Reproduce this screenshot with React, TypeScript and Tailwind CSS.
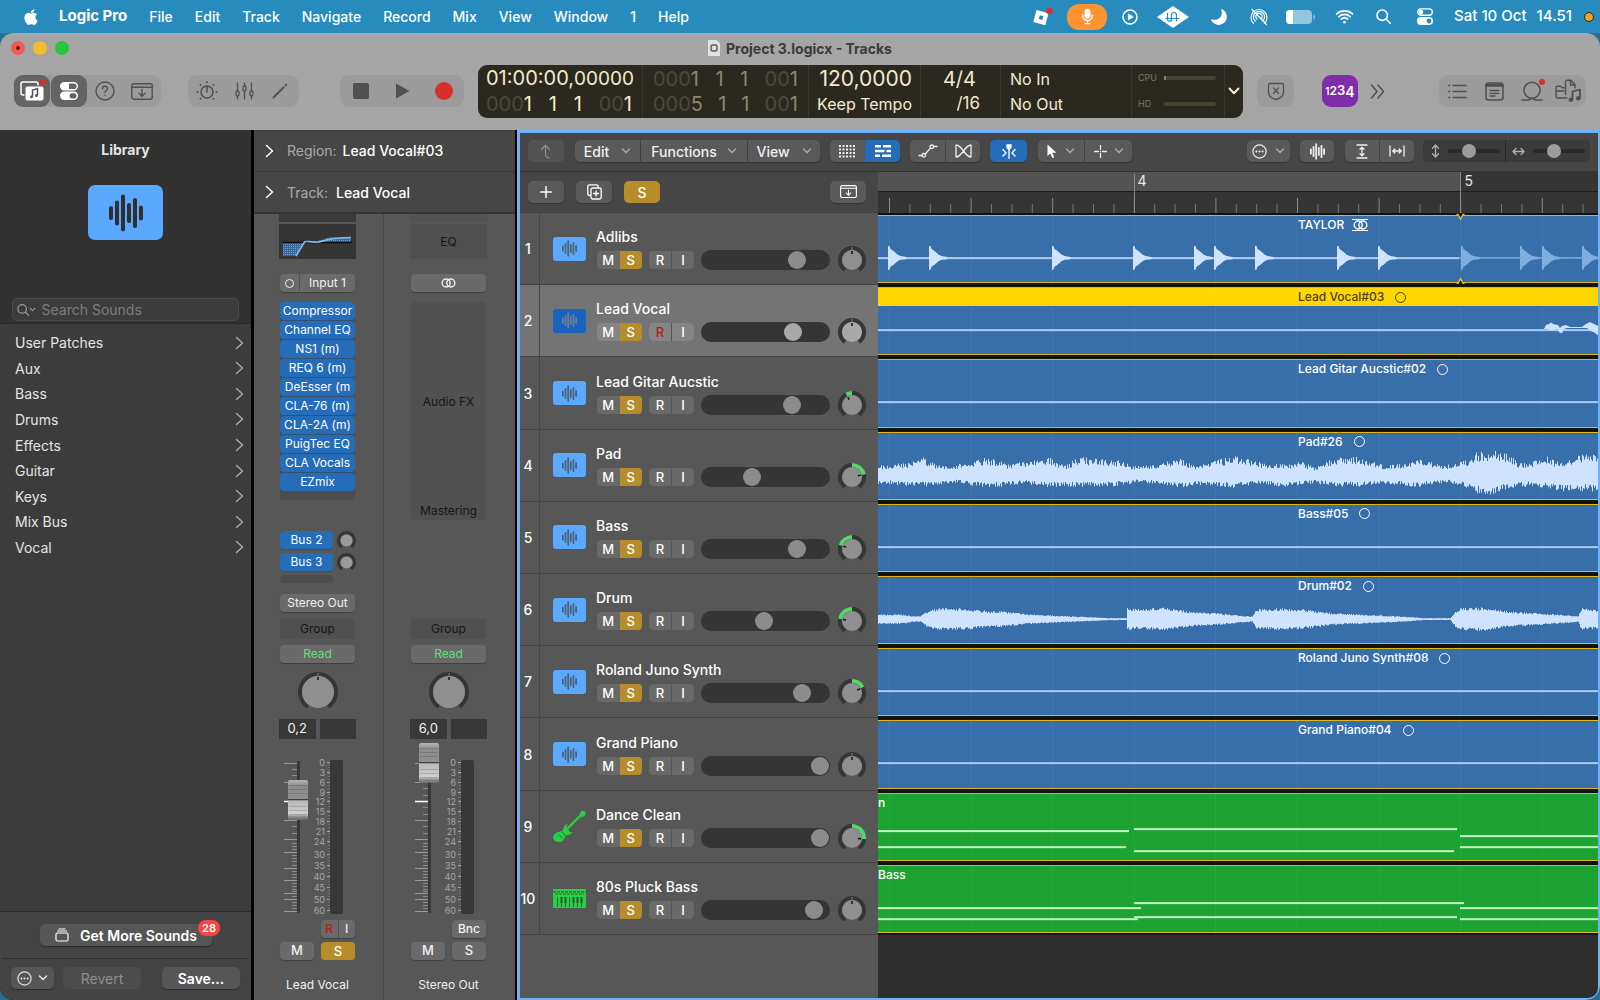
import React from "react";
import { FaApple } from "react-icons/fa";
import { IoMic, IoMoon, IoWifi } from "react-icons/io5";

/* ---------- small drawings ---------- */

type SvgProps = React.SVGProps<SVGSVGElement>;

function Icon({ children, ...p }: SvgProps) {
  return (
    <svg
      fill="none"
      stroke="currentColor"
      strokeWidth={1.5}
      strokeLinecap="round"
      strokeLinejoin="round"
      aria-hidden="true"
      {...p}
    >
      {children}
    </svg>
  );
}

function Chevron({ className = "" }: { className?: string }) {
  return (
    <Icon width={10} height={6} viewBox="0 0 10 6" className={className}>
      <path d="M1.5 1l3.5 3.6L8.500 1" />
    </Icon>
  );
}

function ChevronRight({ className = "" }: { className?: string }) {
  return (
    <Icon width={9} height={14} viewBox="0 0 9 14" className={className}>
      <path d="M1.5 1.500L7.500 7l-6 5.500" />
    </Icon>
  );
}

function WaveBars({ width, height }: { width: number; height: number }) {
  const bars = [14, 25, 37, 20, 30, 15];
  return (
    <svg width={width} height={height} viewBox="0 0 34 38" aria-hidden="true">
      {bars.map((h, i) => (
        <rect key={i} x={i * 6} y={19 - h / 2} width={4} height={h} rx={2} fill="currentColor" />
      ))}
    </svg>
  );
}

function Stereo({ color = "currentColor" }: { color?: string }) {
  return (
    <svg width={15} height={10} viewBox="0 0 15 10" fill="none" stroke={color} strokeWidth={1.4} aria-hidden="true">
      <circle cx={5.2} cy={5} r={4} />
      <circle cx={9.8} cy={5} r={4} />
    </svg>
  );
}

function polar(cx: number, cy: number, r: number, deg: number) {
  const a = ((deg - 90) * Math.PI) / 180;
  return `${(cx + r * Math.cos(a)).toFixed(2)} ${(cy + r * Math.sin(a)).toFixed(2)}`;
}

function arc(c: number, r: number, from: number, to: number) {
  const a = Math.min(from, to);
  const b = Math.max(from, to);
  return `M${polar(c, c, r, a)}A${r} ${r} 0 ${b - a > 180 ? 1 : 0} 1 ${polar(c, c, r, b)}`;
}

function Knob({
  size,
  inner,
  ring,
  angle = 0,
  marker = true,
  fill = "#8f8f8f",
  label,
}: {
  size: number;
  inner: number;
  ring: number;
  angle?: number;
  marker?: boolean;
  fill?: string;
  label: string;
}) {
  const c = size / 2;
  const r = c - ring / 2;
  return (
    <svg width={size} height={size} viewBox={`0 0 ${size} ${size}`} role="img" aria-label={label} className="shrink-0">
      <path d={arc(c, r, -145, 145)} fill="none" stroke="#353535" strokeWidth={ring} />
      {marker && angle !== 0 && <path d={arc(c, r, 0, angle)} fill="none" stroke="#54d769" strokeWidth={ring} />}
      {marker && angle === 0 && <path d={`M${c} 1V${ring + 1}`} stroke="#4fae5c" strokeWidth={1} />}
      <circle cx={c} cy={c} r={inner} fill={fill} />
      {marker && (
        <path
          d={`M${polar(c, c, inner - 1, angle)}L${polar(c, c, inner - 4, angle)}`}
          stroke="#111"
          strokeWidth={1.5}
        />
      )}
    </svg>
  );
}

function DotsCircle() {
  return (
    <Icon width={15} height={15} viewBox="0 0 15 15" strokeWidth={1.2}>
      <circle cx={7.5} cy={7.5} r={6.6} />
      <path d="M4.400 7.500h.01M7.500 7.500h.01M10.600 7.500h.01" strokeWidth={2} />
    </Icon>
  );
}

function TrayIcon({ size = 34 }: { size?: number }) {
  return (
    <Icon width={size} height={(size * 17) / 22} viewBox="0 0 22 17" strokeWidth={1.4}>
      <rect x={0.8} y={0.8} width={20.4} height={15.4} rx={2} />
      <path d="M1 4.200h20M11 6.500v6.500M8 10.300l3 3 3-3" />
    </Icon>
  );
}

/* ---------- menu bar ---------- */

const menus = ["File", "Edit", "Track", "Navigate", "Record", "Mix", "View", "Window", "1", "Help"];

function MenuBar() {
  return (
    <header className="flex h-[33px] shrink-0 items-center justify-between bg-[#288bbd] pl-[22px] pr-1.5 text-[14px] font-medium text-white">
      <nav className="flex items-center gap-[22px]">
        <FaApple className="mr-[-6px] size-[18px]" aria-label="Apple menu" />
        <button className="ml-[3px] text-[15px] font-bold">Logic Pro</button>
        {menus.map((m) => (
          <button key={m}>{m}</button>
        ))}
      </nav>
      <div className="flex items-center">
        <svg width={22} height={20} viewBox="0 0 22 20" aria-hidden="true">
          <path d="M5.500 3L17.500 6.200l-3.200 12L2.300 15z" fill="#fff" />
          <path d="M8.800 8.300l3.600 1-1 3.600-3.600-1z" fill="#288bbd" />
          <circle cx={18.500} cy={4} r={3.300} fill="#dc2f2b" />
        </svg>
        <button aria-label="Microphone in use" className="ml-3.5 flex h-[26px] w-10 items-center justify-center rounded-[12px] bg-[#fb9332]">
          <IoMic className="size-[19px]" />
        </button>
        <Icon width={16} height={16} viewBox="0 0 16 16" className="ml-[15px]">
          <circle cx={8} cy={8} r={7} />
          <path d="M6.400 5.200v5.600L11 8z" fill="currentColor" strokeWidth={0.8} />
        </Icon>
        <svg width={32} height={22} viewBox="0 0 32 22" className="ml-[19px]" aria-hidden="true">
          <path d="M0 11L16 0l16 11-16 11z" fill="#fff" />
          <path
            d="M10.500 7v6c0 2.800 4 2.800 4 0V8.500M14.500 15.500V9.500c0-4 5-4 5 0v6M8.500 12.500h14"
            fill="none"
            stroke="#288bbd"
            strokeWidth={1.200}
          />
        </svg>
        <IoMoon className="ml-[21px] size-[18px] -scale-x-100" />
        <Icon width={18} height={18} viewBox="0 0 18 18" strokeWidth={1.2} className="ml-[22px]">
          <path d="M3.500 15.300a8 8 0 1 1 11 0M5.200 13a5.600 5.600 0 1 1 7.600 0M6.900 11a3.200 3.200 0 1 1 4.200 0M2 1.500l14.500 15" />
        </Icon>
        <svg width={30} height={16} viewBox="0 0 30 16" className="ml-[18px]" aria-hidden="true">
          <rect x={0} y={1} width={26} height={14} rx={4} fill="#93c5de" />
          <path d="M4 1h3v14H4a4 4 0 0 1-4-4V5a4 4 0 0 1 4-4z" fill="#fff" />
          <path d="M27.500 5.500c2 .6 2 4.400 0 5z" fill="#93c5de" />
        </svg>
        <IoWifi className="ml-[18px] size-[21px]" />
        <Icon width={15} height={15} viewBox="0 0 15 15" strokeWidth={1.6} className="ml-[21px]">
          <circle cx={6.200} cy={6.200} r={5.200} />
          <path d="M10 10l4.200 4.200" />
        </Icon>
        <svg width={16} height={17} viewBox="0 0 16 17" className="ml-[26px]" aria-hidden="true">
          <rect x={0.700} y={0.900} width={14.600} height={6.400} rx={3.200} fill="none" stroke="#fff" strokeWidth={1.400} />
          <circle cx={4} cy={4.100} r={2.300} fill="#fff" />
          <rect x={0} y={9} width={16} height={8} rx={4} fill="#fff" />
          <circle cx={12} cy={13} r={2.400} fill="#288bbd" />
        </svg>
        <span className="ml-[21px] text-[15px]">Sat 10 Oct</span>
        <span className="ml-2.5 text-[15px]">14.51</span>
        <span className="ml-3 size-2.5 rounded-full border border-[#1c2a30] bg-[#f59e21]" />
      </div>
    </header>
  );
}

/* ---------- window chrome ---------- */

const toolGroup = "flex h-8 items-center rounded-[9px] bg-[#9b9b9b] text-[#505050]";

function Lcd() {
  const dim = "text-[#4b483b]";
  const cell = "flex flex-col justify-center border-r border-[#3a372c]";
  const line = "flex h-[25px] items-center";
  return (
    <section
      aria-label="Transport display"
      className="flex h-[53px] w-[765px] shrink-0 rounded-[9px] bg-[#2b2820] text-[20px] text-[#f3ecc9]"
    >
      <div className={`${cell} w-[165px] pl-2 pr-2.5`}>
        <div className="flex h-[25px] items-baseline leading-6">
          <span>01:00:00,</span>
          <span className="text-[19px]">00000</span>
        </div>
        <div className={`${line} justify-between`}>
          <span><span className={dim}>000</span>1</span>
          <span>1</span>
          <span>1</span>
          <span><span className={dim}>00</span>1</span>
        </div>
      </div>
      <div className={`${cell} w-[166px] px-2.5 text-[#8b8770]`}>
        {["1", "5"].map((n) => (
          <div key={n} className={`${line} justify-between`}>
            <span><span className={dim}>000</span>{n}</span>
            <span>1</span>
            <span>1</span>
            <span><span className={dim}>00</span>1</span>
          </div>
        ))}
      </div>
      <div className={`${cell} w-[112px] items-end pr-2`}>
        <span className={`${line} text-[21px]`}>120,0000</span>
        <span className={`${line} text-[16px]`}>Keep Tempo</span>
      </div>
      <div className={`${cell} w-[80px] items-end pr-5`}>
        <span className={`${line} pr-1`}>4/4</span>
        <span className={`${line} text-[17px]`}>/16</span>
      </div>
      <div className={`${cell} w-[131px] pl-[9px] text-[16px]`}>
        <span className={line}>No In</span>
        <span className={line}>No Out</span>
      </div>
      <div className={`${cell} w-[93px] gap-1 pl-1.5 text-[9px] text-[#7a765c]`}>
        {["CPU", "HD"].map((n) => (
          <span key={n} className="flex h-[22px] items-center">
            <span className="w-[26px]">{n}</span>
            <span className="h-1 w-[52px] rounded-sm bg-[#47432f]">
              {n === "CPU" && <span className="block h-1 w-0.5 bg-[#8b8770]" />}
            </span>
          </span>
        ))}
      </div>
      <button aria-label="Display mode" className="flex flex-1 items-center justify-center">
        <Icon width={12} height={8} viewBox="0 0 12 8" strokeWidth={2}>
          <path d="M1.500 1.500L6 6.300l4.500-4.800" />
        </Icon>
      </button>
    </section>
  );
}

function Toolbar() {
  return (
    <div className="flex h-[67px] items-center px-3.5 pb-[11px]">
      <div className={`${toolGroup} w-[147px]`}>
        <button aria-label="Library" className="relative flex h-8 w-9 items-center justify-center rounded-[9px] bg-[#646464] text-white">
          <svg width={24} height={20} viewBox="0 0 24 20" aria-hidden="true">
            <rect x={1} y={1} width={17} height={13} rx={2} fill="none" stroke="#fff" strokeWidth={1.500} />
            <rect x={5} y={5} width={19} height={15} rx={2.500} fill="#fff" stroke="#646464" />
            <path d="M12.500 15.500V9l5-1.200V14" fill="none" stroke="#555" strokeWidth={1.500} />
            <circle cx={11.500} cy={15.800} r={1.500} fill="#555" />
            <circle cx={16.500} cy={14.500} r={1.500} fill="#555" />
          </svg>
          <span className="absolute right-1 top-1 size-1.5 rounded-full bg-[#dc2f2b]" />
        </button>
        <button aria-label="Inspector" className="ml-px flex h-8 w-9 items-center justify-center rounded-[9px] bg-[#646464] text-white">
          <svg width={18} height={18} viewBox="0 0 18 18" aria-hidden="true">
            <rect x={0.700} y={0.700} width={16.600} height={7} rx={3.500} fill="none" stroke="#fff" strokeWidth={1.400} />
            <path d="M4.200 1H9v6.500H4.200a3.200 3.200 0 0 1 0-6.500z" fill="#fff" />
            <rect x={0} y={9.600} width={18} height={8.400} rx={4.200} fill="#fff" />
            <rect x={9.500} y={11.200} width={7} height={5.200} rx={2.600} fill="#646464" />
          </svg>
        </button>
        <button aria-label="Quick Help" className="flex h-8 w-9 items-center justify-center">
          <Icon width={20} height={20} viewBox="0 0 20 20" strokeWidth={1.400}>
            <circle cx={10} cy={10} r={9} />
            <path d="M7.500 7.800c.1-3.400 5-3.300 5-.3 0 2-2.500 2-2.500 4M10 14.200v.1" />
          </Icon>
        </button>
        <button aria-label="Toolbar" className="flex h-8 flex-1 items-center justify-center">
          <TrayIcon size={22} />
        </button>
      </div>
      <div className={`${toolGroup} ml-[27px] w-[111px] justify-between px-[7px]`}>
        <button aria-label="Smart Controls">
          <Icon width={24} height={20} viewBox="0 0 24 20">
            <circle cx={12} cy={11} r={6} />
            <path d="M12 5.500V11" />
            <path d="M12 1.200h.01M5.500 4h.01M18.500 4h.01M2.500 11h.01M21.500 11h.01M5.500 17.800h.01M18.500 17.800h.01" strokeWidth={2} />
          </Icon>
        </button>
        <button aria-label="Mixer" className="mr-0.5">
          <Icon width={19} height={18} viewBox="0 0 19 18" strokeWidth={1.300}>
            <path d="M2.500 1v8M2.500 14v3M9.500 1v3M9.500 9v8M16.500 1v8M16.500 14v3" />
            <rect x={1} y={9} width={3} height={5} rx={1.500} />
            <rect x={8} y={4} width={3} height={5} rx={1.500} />
            <rect x={15} y={9} width={3} height={5} rx={1.500} />
          </Icon>
        </button>
        <button aria-label="Editors" className="mr-1">
          <Icon width={16} height={16} viewBox="0 0 16 16" strokeWidth={1.900}>
            <path d="M1.500 14.500L11.500 4.500M13.500 2.500l.8-.8" />
          </Icon>
        </button>
      </div>
      <div className={`${toolGroup} ml-[41px] w-[124px] justify-between px-[11px]`}>
        <button aria-label="Stop" className="ml-0.5 size-4 rounded-[2px] bg-[#505050]" />
        <button aria-label="Play">
          <svg width={15} height={16} viewBox="0 0 15 16" aria-hidden="true">
            <path d="M1 0.500L14.500 8 1 15.500z" fill="#505050" />
          </svg>
        </button>
        <button aria-label="Record" className="size-[18px] rounded-full bg-[#d92e2a]" />
      </div>
      <div className="ml-3.5">
        <Lcd />
      </div>
      <button aria-label="Replace mode" className={`${toolGroup} ml-3.5 w-[37px] justify-center`}>
        <Icon width={18} height={19} viewBox="0 0 18 19" strokeWidth={1.300}>
          <path d="M3 1.500h12c1 0 1.500.5 1.500 1.500v7c0 4-3 6.500-7.500 7.500C4.500 16.500 1.500 14 1.500 10V3c0-1 .5-1.500 1.500-1.500zM6.500 6l5 5.500M11.500 6l-5 5.500" />
        </Icon>
      </button>
      <button aria-label="Count-in" className="ml-7 flex h-8 w-9 items-center justify-center rounded-[9px] bg-[#7f2dab] font-semibold text-white">
        <span className="text-[10px]">1</span>
        <span className="text-[12px]">2</span>
        <span className="text-[13px]">3</span>
        <span className="text-[14px]">4</span>
      </button>
      <button aria-label="More controls" className="ml-3 text-[#505050]">
        <Icon width={15} height={15} viewBox="0 0 15 15">
          <path d="M1.500 1l5.500 6.500L1.500 14M8 1l5.500 6.500L8 14" />
        </Icon>
      </button>
      <div className={`${toolGroup} ml-auto w-[147px] justify-between pl-[9px] pr-1`}>
        <button aria-label="List editors">
          <Icon width={19} height={15} viewBox="0 0 19 15" strokeWidth={1.400}>
            <path d="M5 1.500h13M5 7.500h13M5 13.500h13" />
            <path d="M1.200 1.500h.01M1.200 7.500h.01M1.200 13.500h.01" strokeWidth={2} />
          </Icon>
        </button>
        <button aria-label="Note pads" className="ml-1.5">
          <Icon width={19} height={19} viewBox="0 0 19 19" strokeWidth={1.500}>
            <rect x={1} y={1} width={17} height={17} rx={2.500} />
            <path d="M1.500 3.200h16" strokeWidth={3} />
            <path d="M5 8.500h9M5 11.300h9M5 14h5" strokeWidth={1.300} />
          </Icon>
        </button>
        <button aria-label="Loop browser" className="relative ml-1">
          <Icon width={22} height={20} viewBox="0 0 22 20" strokeWidth={1.500}>
            <circle cx={11} cy={9.300} r={8} />
            <path d="M1 19h5c2.500 0 4-.7 5-1.700M21 19h-5c-2.500 0-4-.7-5-1.700" />
          </Icon>
          <span className="absolute -right-0.5 -top-0.5 size-1.5 rounded-full bg-[#dc2f2b]" />
        </button>
        <button aria-label="Browsers">
          <Icon width={27} height={24} viewBox="0 0 27 24" strokeWidth={1.400}>
            <path d="M12 19H3c-1.200 0-2-.8-2-2V9c0-1 .7-1.700 1.700-1.700h3l1.500 1.500H9M1 12h8" />
            <path d="M10.500 15.500V3c0-1 .7-1.700 1.700-1.700h3.600L20 5.500V9M15.500 1.500V6H20" />
            <path d="M17.500 20.500v-8l7.500-2v8.500" strokeWidth={1.800} />
            <circle cx={15.800} cy={20.800} r={1.600} fill="currentColor" />
            <circle cx={23.300} cy={19.200} r={1.600} fill="currentColor" />
          </Icon>
        </button>
      </div>
    </div>
  );
}

function TitleBar() {
  return (
    <div className="shrink-0 bg-[#a5a5a5]">
      <div className="grid h-[30px] grid-cols-[1fr_auto_1fr] items-center px-[11px]">
        <div className="flex gap-2">
          <button aria-label="Close" className="flex size-3.5 items-center justify-center rounded-full bg-[#ee5c54]">
            <span className="size-1 rounded-full bg-[#6e0c08]" />
          </button>
          <button aria-label="Minimise" className="size-3.5 rounded-full bg-[#f2bd2e]" />
          <button aria-label="Zoom" className="size-3.5 rounded-full bg-[#28c63f]" />
        </div>
        <h1 className="flex items-center gap-1.5 text-[14px] font-bold text-[#3b3b3b]">
          <svg width={12} height={16} viewBox="0 0 12 16" aria-hidden="true">
            <path d="M0 0h8.500L12 3.500V16H0z" fill="#e2e2e2" />
            <rect x={3} y={5} width={6} height={6} rx={1.500} fill="#ddd" stroke="#555" strokeWidth={1.400} />
          </svg>
          Project 3.logicx - Tracks
        </h1>
      </div>
      <Toolbar />
    </div>
  );
}

/* ---------- library ---------- */

const categories = ["User Patches", "Aux", "Bass", "Drums", "Effects", "Guitar", "Keys", "Mix Bus", "Vocal"];

function Library() {
  const btn = "flex h-[22px] items-center justify-center rounded-[5px] bg-[#565656] shadow-[0_1px_1px_#2b2b2b]";
  return (
    <aside className="flex w-[251px] shrink-0 flex-col bg-[#3c3c3c] text-[14px] text-[#e4e4e4]">
      <div className="flex h-[194px] shrink-0 flex-col items-center border-b border-[#292929] bg-[#323232] px-3 pt-[9px]">
        <h2 className="font-bold leading-[22px]">Library</h2>
        <div className="mt-6 flex h-[55px] w-[75px] items-center justify-center rounded-[7px] bg-[#5ba8ff] text-[#303030]">
          <WaveBars width={34} height={38} />
        </div>
        <label className="mt-[58px] flex h-[23px] w-full items-center rounded-[5px] border border-[#4b4b4b] bg-[#3c3c3c] pl-1 text-[#999]">
          <Icon width={14} height={14} viewBox="0 0 14 14" strokeWidth={1.400}>
            <circle cx={5.800} cy={5.800} r={4.800} />
            <path d="M9.500 9.500l3.700 3.700" />
          </Icon>
          <Chevron className="h-[5px] w-2" />
          <input aria-label="Search Sounds" placeholder="Search Sounds" className="ml-[5px] w-full bg-transparent outline-none placeholder:text-[#7c7c7c]" />
        </label>
      </div>
      <ul className="mt-1.5 flex h-[230px] flex-col">
        {categories.map((c) => (
          <li key={c} className="flex-1">
            <button className="flex h-full w-full items-center justify-between pl-[15px] pr-[7px]">
              {c}
              <ChevronRight className="text-[#a8a8a8]" />
            </button>
          </li>
        ))}
      </ul>
      <div className="mt-auto shrink-0 border-t border-[#2c2c2c] bg-[#444]">
        <div className="mx-0.5 h-[47px] border-b border-[#2f2f2f] pl-[38px] pt-3">
          <button className={`${btn} relative w-[172px] gap-[11px] font-semibold text-white`}>
            <Icon width={14} height={14} viewBox="0 0 14 14" strokeWidth={1.200}>
              <rect x={1} y={5} width={12} height={8} rx={1.500} />
              <path d="M2.500 3h9M4 1h6" />
            </Icon>
            Get More Sounds
            <span className="absolute -right-2 -top-1 flex h-4 w-[22px] items-center justify-center rounded-full bg-[#fb4440] text-[11px]">28</span>
          </button>
        </div>
        <div className="flex h-[41px] items-start px-[11px] pt-2">
          <button aria-label="Actions" className={`${btn} w-[43px] gap-1.5`}>
            <DotsCircle />
            <Chevron />
          </button>
          <button disabled className="ml-[9px] flex h-[22px] w-[78px] items-center justify-center rounded-[5px] bg-[#4c4c4c] text-[#8e8e8e]">Revert</button>
          <button className={`${btn} ml-auto w-[78px] font-semibold text-white`}>Save...</button>
        </div>
      </div>
    </aside>
  );
}

/* ---------- inspector ---------- */

const scale: [number, number][] = [
  [0, 23], [3, 33], [6, 43], [9, 53], [12, 62], [15, 72], [18, 82], [21, 92], [24, 102],
  [30, 115], [35, 126], [40, 137], [45, 148], [50, 160], [60, 171],
];
const longTicks = [23, 42, 80, 99, 112, 128, 140, 153, 159, 171];
const shortTicks = [29, 35, 48, 55, 67, 74, 86, 93, 103, 106, 109, 115, 118, 121, 125, 131, 134, 137, 143, 146, 149, 151, 156, 162, 165, 168];

function Fader({ cap, id }: { cap: number; id: string }) {
  return (
    <svg width={76} height={177} viewBox="0 0 76 177" role="img" aria-label={`${id} fader and level meter`}>
      <defs>
        <linearGradient id={id} x1="0" y1="0" x2="0" y2="1">
          <stop offset="0" stopColor="#b4b4b4" />
          <stop offset="0.15" stopColor="#8d8d8d" />
          <stop offset="0.47" stopColor="#8f8f8f" />
          <stop offset="0.49" stopColor="#333" />
          <stop offset="0.52" stopColor="#b9b9b9" />
          <stop offset="0.85" stopColor="#cfcfcf" />
          <stop offset="0.92" stopColor="#8a8a8a" />
          <stop offset="1" stopColor="#6a6a6a" />
        </linearGradient>
      </defs>
      <rect x={17} y={21} width={3} height={152} rx={1} fill="#383838" />
      {longTicks.map((y) => <path key={y} d={`M4 ${y}.5h13`} stroke="#989898" />)}
      {shortTicks.map((y) => <path key={y} d={`M12 ${y}.5h5`} stroke="#8a8a8a" />)}
      <path d="M4 61.500h13" stroke="#fff" strokeWidth={1.500} />
      <rect x={8} y={cap} width={20} height={40} rx={2} fill={`url(#${id})`} />
      {[5, 9, 13, 26, 30, 34].map((d) => (
        <path key={d} d={`M9 ${cap + d}.5h18`} stroke="#000" strokeOpacity={0.15} />
      ))}
      <rect x={50} y={20} width={13} height={154} rx={2} fill="#383838" />
      {scale.map(([n, y]) => (
        <g key={n}>
          <text x={45} y={y + 3} textAnchor="end" fontSize={9} fill="#a6a6a6">{n}</text>
          <path d={`M47 ${y - 0.5}h3`} stroke="#a6a6a6" />
        </g>
      ))}
      <path d="M49 24V171" stroke="#8a8a8a" strokeDasharray="1 2" />
    </svg>
  );
}

const plugins = ["Compressor", "Channel EQ", "NS1 (m)", "REQ 6 (m)", "DeEsser (m", "CLA-76 (m)", "CLA-2A (m)", "PuigTec EQ", "CLA Vocals", "EZmix"];

const grayBase = "flex items-center justify-center rounded-[4px] bg-[#6a6a6a] shadow-[0_1px_1px_#404040]";
const grayBtn = `${grayBase} text-[#f0f0f0]`;
const blueBtn = "flex h-[18px] items-center justify-center overflow-hidden whitespace-nowrap rounded-[4px] bg-[#256cb9] text-white shadow-[0_1px_0_#35506f]";

function StripLower({ value, cap, name, children, first }: { value: string; cap: number; name: string; children: React.ReactNode; first: boolean }) {
  return (
    <>
      <button className="mt-[7px] h-5 bg-[#505050] text-[#161616]">Group</button>
      <button className={`${grayBase} mt-1.5 h-[18px] text-[#5fe07c]`}>Read</button>
      <div className="mt-[9px] flex h-10 justify-center">
        <Knob size={40} inner={16} ring={4} label={`${name} pan`} />
      </div>
      <div className="-mx-px mt-[7px] flex h-5 gap-1 text-[13px] text-[#f0f0f0]">
        <span className="flex flex-1 items-center justify-center bg-[#383838]">{value}</span>
        <span className="flex-1 bg-[#383838]" />
      </div>
      <div className="mt-px h-[177px]">
        <Fader cap={cap} id={first ? "cap-track" : "cap-output"} />
      </div>
      {children}
      <span className="mt-4 whitespace-nowrap text-center text-[12px] leading-[18px] text-[#f0f0f0]">{name}</span>
    </>
  );
}

function Inspector() {
  const head = "flex h-[42px] w-full items-center gap-[13px] bg-[#464646] pl-[11px] text-[14px]";
  return (
    <aside className="flex w-[261px] shrink-0 flex-col bg-[#575757] text-[12px]">
      <button className={`${head} border-b border-[#383838]`}>
        <ChevronRight className="text-white" />
        <span className="text-[#a9a9a9]">Region: <span className="ml-0.5 font-medium text-white">Lead Vocal#03</span></span>
      </button>
      <button className={`${head} border-b-2 border-[#363636]`}>
        <ChevronRight className="text-white" />
        <span className="text-[#a9a9a9]">Track: <span className="ml-1 font-medium text-white">Lead Vocal</span></span>
      </button>
      <div className="flex min-h-0 flex-1">
        <div className="flex w-[130px] shrink-0 flex-col border-r border-[#484848] pl-[26px]">
          <div className="flex w-[75px] flex-col">
            <div className="-mx-px h-2 bg-[#3a3a3a]" />
            <svg width={77} height={35} viewBox="0 0 77 35" className="-mx-px mt-0.5 bg-[#353535]" role="img" aria-label="EQ curve">
              <defs>
                <pattern id="eq-dots" width={2} height={2} patternUnits="userSpaceOnUse">
                  <rect width={2} height={2} fill="#42648a" />
                  <rect width={1} height={1} fill="#6aa2dc" />
                </pattern>
              </defs>
              <path d="M4 19V32h13L25 19z" fill="url(#eq-dots)" />
              <path d="M30 18c14-1 17-4 21-5h21v5z" fill="url(#eq-dots)" />
              <path d="M4 18.500h69" stroke="#0c0c0c" strokeWidth={1.400} />
              <path d="M17 32l8.500-14c1-1.500 10 .5 13 .2C44 17.500 48 14 72 13.500" fill="none" stroke="#7db8f5" strokeWidth={1.600} />
            </svg>
            <div className="mt-[15px] flex h-[18px] gap-px">
              <button aria-label="Input format" className={`${grayBtn} w-[19px] rounded-r-none`}>
                <span className="size-[9px] rounded-full border-[1.5px] border-[#f0f0f0]" />
              </button>
              <button className={`${grayBtn} flex-1 rounded-l-none`}>Input 1</button>
            </div>
            <div className="mt-2.5 flex flex-col gap-px rounded-[4px] bg-[#4d4d4d] pb-[9px]">
              {plugins.map((p) => <button key={p} className={blueBtn}>{p}</button>)}
            </div>
            <div className="mt-[31px] flex flex-col gap-1">
              {["Bus 2", "Bus 3"].map((b) => (
                <div key={b} className="flex h-[18px] items-center gap-1">
                  <button className={`${blueBtn} w-[53px] shrink-0`}>{b}</button>
                  <Knob size={19} inner={6} ring={3} marker={false} fill="#9a9a9a" label={`${b} send level`} />
                </div>
              ))}
              <div className="h-2 w-[53px] rounded-[4px] bg-[#4d4d4d]" />
            </div>
            <button className={`${grayBtn} mt-[11px] h-[18px]`}>Stereo Out</button>
            <StripLower value="0,2" cap={40} name="Lead Vocal" first>
              <div className="ml-auto mt-[3px] flex h-[18px] w-[34px]">
                <button className={`${grayBase} flex-1 rounded-r-none border-r border-[#555] font-medium text-[#a82620]`}>R</button>
                <button className={`${grayBtn} flex-1 rounded-l-none font-medium`}>I</button>
              </div>
              <div className="mt-1 flex h-[18px] justify-between text-[13px] font-medium">
                <button className={`${grayBtn} w-[34px]`}>M</button>
                <button className="w-[34px] rounded-[4px] bg-[#b78d2c] text-white">S</button>
              </div>
            </StripLower>
          </div>
        </div>
        <div className="flex flex-1 flex-col pl-[27px]">
          <div className="flex w-[75px] flex-col">
            <div className="-mx-px h-2 bg-[#535353]" />
            <button className="-mx-px mt-0.5 h-[35px] bg-[#505050] text-[#161616]">EQ</button>
            <button aria-label="Stereo format" className={`${grayBtn} mt-[15px] h-[18px]`}>
              <Stereo />
            </button>
            <div className="mt-2.5 flex h-[218px] flex-col items-center justify-between rounded-[4px] bg-[#515151] text-[#161616]">
              <span />
              <span>Audio FX</span>
              <span>Mastering</span>
            </div>
            <div className="h-[92px]" />
            <StripLower value="6,0" cap={3} name="Stereo Out" first={false}>
              <button className={`${grayBtn} ml-auto mt-[3px] h-[18px] w-[34px] font-medium`}>Bnc</button>
              <div className="mt-1 flex h-[18px] justify-between text-[13px] font-medium">
                <button className={`${grayBtn} w-[34px]`}>M</button>
                <button className={`${grayBtn} w-[34px]`}>S</button>
              </div>
            </StripLower>
          </div>
        </div>
      </div>
    </aside>
  );
}

/* ---------- waveforms ---------- */

const MID = 45;

function noise(i: number) {
  const v = Math.sin(i * 127.1 + 11.7) * 43758.5453;
  return v - Math.floor(v);
}

function sample(points: [number, number][], x: number) {
  for (let i = 1; i < points.length; i++) {
    if (x <= points[i][0]) {
      const [x0, y0] = points[i - 1];
      const [x1, y1] = points[i];
      return x1 === x0 ? y1 : y0 + ((y1 - y0) * (x - x0)) / (x1 - x0);
    }
  }
  return points[points.length - 1][1];
}

function envelope(up: [number, number][], down: [number, number][], rough: number) {
  let d = "";
  for (let x = 0; x < 720; x++) {
    const a = sample(up, x) * (1 - rough * noise(x));
    const b = sample(down, x) * (1 - rough * noise(x + 900));
    d += `M${x} ${(MID - a).toFixed(1)}h1V${(MID + b).toFixed(1)}h-1z`;
  }
  return d;
}

const padUp: [number, number][] = [
  [0, 10], [30, 13], [45, 18], [60, 10], [72, 8], [85, 13], [110, 18], [130, 11], [170, 18], [188, 10], [200, 19], [240, 15], [255, 9],
  [275, 10], [300, 17], [318, 10], [340, 16], [362, 20], [385, 12], [410, 11], [420, 15], [436, 8], [455, 17], [475, 19], [495, 15], [505, 10],
  [530, 12], [545, 17], [565, 9], [580, 14], [592, 15], [598, 23], [615, 25], [632, 21], [640, 13], [650, 12], [668, 19], [682, 12], [700, 20], [720, 24],
];
const padDown: [number, number][] = [
  [0, 9], [20, 10], [40, 12], [70, 9], [80, 8], [100, 12], [120, 12], [145, 9], [170, 12], [195, 12], [240, 11], [262, 7], [300, 13],
  [325, 10], [355, 13], [380, 9], [405, 12], [437, 8], [455, 12], [480, 12], [505, 9], [540, 12], [572, 8], [585, 11], [596, 18],
  [612, 20], [630, 14], [655, 11], [680, 16], [720, 17],
];
const drumEnv: [number, number][] = [
  [0, 5], [22, 5], [35, 3], [42, 3], [50, 9], [60, 11], [88, 11], [110, 8], [125, 8], [150, 5], [190, 3], [215, 2], [230, 1],
  [248, 1], [249, 11], [265, 10], [285, 12], [310, 8], [340, 6], [370, 3], [374, 3], [378, 10], [395, 11], [425, 10],
  [455, 6], [480, 5], [520, 3], [545, 1], [572, 1], [577, 8], [582, 11], [605, 12], [630, 8], [660, 6], [690, 4], [700, 3], [703, 11], [720, 10],
];
const padPath = envelope(padUp, padDown, 0.45);
const drumPath = envelope(drumEnv, drumEnv, 0.28);

function hit(x: number) {
  return `M${x} ${MID - 12}l1.500 0 1 3 3 2 4 3.500 3 1.500 6 1v2l-6 .5-3 1.500-4 3.500-3 2-1 3h-1.500z`;
}
const hits = [10, 51, 174, 255, 316, 336, 377, 459, 500];
const faintHits = [583, 642, 664, 704];

const beats = [11.5, 93, 174.500, 256, 337.500, 419, 501, 582.500, 664];

type Track = {
  name: string;
  volume: number;
  pan: number;
  icon?: "guitar" | "synth";
  region: string;
  midi?: [number, number, number][];
};

const tracks: Track[] = [
  { name: "Adlibs", volume: 78, pan: 0, region: "TAYLOR" },
  { name: "Lead Vocal", volume: 75, pan: 0, region: "Lead Vocal#03" },
  { name: "Lead Gitar Aucstic", volume: 74, pan: -28, region: "Lead Gitar Aucstic#02" },
  { name: "Pad", volume: 38, pan: 78, region: "Pad#26" },
  { name: "Bass", volume: 78, pan: -72, region: "Bass#05" },
  { name: "Drum", volume: 49, pan: -80, region: "Drum#02" },
  { name: "Roland Juno Synth", volume: 83, pan: 62, region: "Roland Juno Synth#08" },
  { name: "Grand Piano", volume: 99, pan: 0, region: "Grand Piano#04" },
  {
    name: "Dance Clean", volume: 99, pan: 95, icon: "guitar", region: "n",
    midi: [[0, 251, 40], [0, 248, 56], [256, 579, 38], [256, 576, 60], [582, 720, 45], [582, 720, 56]],
  },
  {
    name: "80s Pluck Bass", volume: 94, pan: 0, icon: "synth", region: "Bass",
    midi: [[0, 263, 45], [0, 260, 56], [256, 586, 40], [256, 579, 54], [582, 720, 45], [582, 720, 56]],
  },
];

function Wave({ index, track }: { index: number; track: Track }) {
  const pale = "#cfe3ff";
  return (
    <svg className="absolute inset-0 h-full w-full" viewBox="0 0 720 72" preserveAspectRatio="none" aria-hidden="true">
      {beats.map((x) => (
        <path key={x} d={`M${x} 2V70`} stroke="#fff" strokeOpacity={0.06} />
      ))}
      {track.midi ? (
        track.midi.map(([a, b, y]) => <rect key={`${a}-${y}`} x={a} y={y - 1} width={b - a} height={2} fill="#c3f2c4" />)
      ) : index === 0 ? (
        <>
          <rect x={0} y={MID - 1} width={581} height={2} fill={pale} fillOpacity={0.8} />
          <rect x={581} y={MID - 1} width={139} height={1.500} fill="#7fadde" />
          <path d={hits.map(hit).join("")} fill={pale} />
          <path d={faintHits.map(hit).join("")} fill="#7fadde" />
          <path d="M578.500 1.500h1.500l2.500 4.500 2.500-4.500h1.500M578.500 70h1.500l2.500-4.500 2.500 4.500h1.500" fill="#111" stroke="#e8c418" strokeWidth={1.400} />
        </>
      ) : index === 3 ? (
        <path d={padPath} fill={pale} />
      ) : index === 5 ? (
        <path d={drumPath} fill={pale} />
      ) : (
        <>
          <rect x={0} y={MID - 1} width={720} height={2} fill="#a9cbf2" />
          {index === 1 && (
            <path
              d="M666 44l2-4 3-1 2-1.500 2 1.500 5 1 2 3 2-2 4-1 4 2h12l4-3 4-2 4 2 4 2v9l-4-3-3-1-4-3h-20l-3 1-2 4-3-1-1-3-7 1-4-1z"
              fill={pale}
            />
          )}
        </>
      )}
    </svg>
  );
}

/* ---------- tracks area ---------- */

function Region({ index, track }: { index: number; track: Track }) {
  const selected = index === 1;
  const midi = Boolean(track.midi);
  return (
    <div className="relative min-h-0 flex-1 overflow-hidden bg-[#14140f] py-0.5">
      <div className={`h-full border-y border-[#dcb61a] ${midi ? "bg-[#1ca332]" : "bg-[#386fab]"}`}>
        <div
          className={`flex items-center whitespace-nowrap text-[12px] font-medium ${
            selected ? "h-[18px] bg-[#ffd600] text-[#4b4010]" : "h-[18px] text-white"
          }`}
        >
          {!midi && <span className="w-7/12 shrink-0" />}
          <span>{track.region}</span>
          {index === 0 && (
            <span className="ml-2 flex w-4 justify-center border-y border-white">
              <Stereo />
            </span>
          )}
          {index > 0 && !midi && <span className="ml-[11px] size-[11px] rounded-full border-[1.5px] border-current" />}
        </div>
      </div>
      <Wave index={index} track={track} />
    </div>
  );
}

function TrackIcon({ track, selected }: { track: Track; selected: boolean }) {
  if (track.icon === "guitar")
    return (
      <svg width={33} height={33} viewBox="0 0 33 33" className="shrink-0" aria-hidden="true">
        <path d="M13 20L29 4" stroke="#27d043" strokeWidth={2.400} />
        <path d="M26.500 4l2.500-3.500 3.500 1.500-.5 3.500-3.500 2z" fill="#27d043" />
        <path d="M15 13.500c-1.500.5-4.500 2.500-4.500 5.500-1 3-3.500 2.500-5.500 3-3 .8-5.300 3-4.800 6 .5 3.500 4.800 4.700 7.800 3.700 3.500-1.200 2.500-4 5-6 2-1.500 5-.5 6.500-3.700-2 .8-3.500 0-3.500-1.500 0-2-2.500-1-2.500-3 0-1.500.5-2.500 1.500-4z" fill="#27d043" />
        <path d="M6 24.500l3.500 4M9 22l4 4" stroke="#256b2c" strokeWidth={1} />
      </svg>
    );
  if (track.icon === "synth")
    return (
      <svg width={33} height={19} viewBox="0 0 33 19" className="shrink-0" aria-hidden="true">
        <path d="M0 0h33v19H0z" fill="#27d043" />
        <path d="M0 2.800h33M2 5h29" stroke="#2f6b38" strokeWidth={1.200} strokeDasharray="3 1" />
        <path d="M4.500 8v10M8.500 8v10M12.500 8v10M16.500 8v10M20.500 8v10M24.500 8v10M28.500 8v10" stroke="#2d5533" strokeWidth={0.800} />
        <path d="M8.500 8v6M12.500 8v6M20.500 8v6M24.500 8v6M28.500 8v6" stroke="#2d5533" strokeWidth={2} />
      </svg>
    );
  return (
    <span
      className={`flex h-6 w-[33px] shrink-0 items-center justify-center rounded-[3px] ${
        selected ? "bg-[#1763bd] text-[#6f7f94]" : "bg-[#5ba8ff] text-[#4e6377]"
      }`}
    >
      <WaveBars width={15} height={17} />
    </span>
  );
}

function TrackHeader({ index, track }: { index: number; track: Track }) {
  const selected = index === 1;
  const key = `h-full flex-1 shadow-[0_1px_1px_#444] ${selected ? "bg-[#858585]" : "bg-[#696969]"}`;
  return (
    <div className={`flex min-h-0 flex-1 border-b border-[#454545] ${selected ? "bg-[#747474]" : ""}`}>
      <div className="flex w-5 shrink-0 items-center justify-center border-r border-[#474747] pr-[3px] text-[14px] font-medium">
        <span>{index + 1}</span>
      </div>
      <div className="flex flex-1 items-center pl-[13px]">
        <TrackIcon track={track} selected={selected} />
        <div className="ml-2.5">
          <div className="text-[14px] font-medium leading-5">{track.name}</div>
          <div className="mt-[3px] flex h-5 items-center">
            <div className="ml-px flex h-[18px] w-[45px] overflow-hidden rounded-[4px] text-[13px] font-medium">
              <button aria-label={`Mute ${track.name}`} className={key}>M</button>
              <button aria-label={`Solo ${track.name}`} className="h-full flex-1 bg-[#b78d2c]">S</button>
            </div>
            <div className="ml-[7px] flex h-[18px] w-[45px] overflow-hidden rounded-[4px] text-[13px] font-medium">
              <button aria-label={`Record ${track.name}`} className={`${key} border-r border-[#5a5a5a] ${selected ? "text-[#b3211d]" : ""}`}>R</button>
              <button aria-label={`Input monitor ${track.name}`} className={key}>I</button>
            </div>
            <input
              type="range"
              aria-label={`${track.name} volume`}
              defaultValue={track.volume}
              className={`ml-[7px] h-5 w-[129px] appearance-none rounded-full bg-[#353535] [&::-webkit-slider-thumb]:size-[18px] [&::-webkit-slider-thumb]:appearance-none [&::-webkit-slider-thumb]:rounded-full ${
                selected ? "[&::-webkit-slider-thumb]:bg-[#a9a9a9]" : "[&::-webkit-slider-thumb]:bg-[#8c8c8c]"
              }`}
            />
            <span className="ml-2 flex">
              <Knob size={28} inner={10} ring={4} angle={track.pan} fill={selected ? "#a9a9a9" : "#8f8f8f"} label={`${track.name} pan`} />
            </span>
          </div>
        </div>
      </div>
    </div>
  );
}

const tBtn = "flex h-[22px] items-center justify-center bg-[#5a5a5a] text-[#f0f0f0] shadow-[0_1px_1px_#333]";
const tBlue = "flex h-[22px] items-center justify-center bg-[#256cb9] text-white shadow-[0_1px_1px_#333]";

function ZoomSlider({ label, value, children, className }: { label: string; value: number; children: React.ReactNode; className: string }) {
  return (
    <label className={`flex h-[22px] items-center gap-2 bg-[#3b3b3b] text-[#b0b0b0] ${className}`}>
      {children}
      <input
        type="range"
        aria-label={label}
        defaultValue={value}
        className="h-1 w-[52px] appearance-none rounded-full bg-[#2a2a2a] [&::-webkit-slider-thumb]:size-3.5 [&::-webkit-slider-thumb]:appearance-none [&::-webkit-slider-thumb]:rounded-full [&::-webkit-slider-thumb]:bg-[#9c9c9c]"
      />
    </label>
  );
}

function TracksToolbar() {
  return (
    <div className="flex h-[39px] shrink-0 items-center border-b border-[#333] bg-[#464646] pb-0.5 pl-2 pr-2 text-[14px] font-medium">
      <button aria-label="Leave folder" className="flex h-[22px] w-9 items-center justify-center rounded-[5px] bg-[#525252] text-[#8c8c8c]">
        <Icon width={12} height={15} viewBox="0 0 12 15" strokeWidth={1.300}>
          <path d="M1.500 5.500L5.500 1.200l4 4.300M5.500 1.500v9c0 2 1 3 3.500 3.300" />
        </Icon>
      </button>
      <div className="ml-[11px] flex gap-px">
        <button className={`${tBtn} w-[65px] gap-3 rounded-l-[5px]`}>Edit <Chevron className="text-[#a5a5a5]" /></button>
        <button className={`${tBtn} w-[106px] gap-2.5 whitespace-nowrap`}>Functions <Chevron className="text-[#a5a5a5]" /></button>
        <button className={`${tBtn} w-[72px] gap-3 rounded-r-[5px]`}>View <Chevron className="text-[#a5a5a5]" /></button>
      </div>
      <div className="ml-2.5 flex">
        <button aria-label="Grid view" className={`${tBtn} w-[35px] rounded-l-[5px]`}>
          <svg width={17} height={13} viewBox="0 0 17 13" aria-hidden="true">
            {[0, 1, 2, 3].map((r) => [0, 1, 2, 3, 4].map((c) => (
              <rect key={`${r}${c}`} x={c * 3.500} y={r * 3.500} width={2} height={2} fill="#eee" />
            )))}
          </svg>
        </button>
        <button aria-label="Tracks view" className={`${tBlue} w-[35px] rounded-r-[5px]`}>
          <svg width={16} height={12} viewBox="0 0 16 12" fill="#fff" aria-hidden="true">
            <path d="M0 0h6v2.500H0zM8 0h8v2.500H8zM0 4.700h9.500v2.500H0zM11.500 4.700H16v2.500h-4.500zM0 9.400h5v2.500H0zM7 9.400h9v2.500H7z" />
          </svg>
        </button>
      </div>
      <div className="ml-2.5 flex gap-px">
        <button aria-label="Automation" className={`${tBtn} w-[35px] rounded-l-[5px]`}>
          <Icon width={20} height={14} viewBox="0 0 20 14" strokeWidth={1.300}>
            <path d="M1 11.500h3M7.300 10L12.200 4.300M15.500 2.500H19" />
            <circle cx={5.800} cy={11.300} r={1.800} />
            <circle cx={13.800} cy={2.800} r={1.800} />
          </Icon>
        </button>
        <button aria-label="Flex" className={`${tBtn} w-[34px] rounded-r-[5px]`}>
          <Icon width={17} height={14} viewBox="0 0 17 14" strokeWidth={1.300}>
            <path d="M1 1v12c2.500 0 5-2.500 7.500-6S13.500 1 16 1v12c-2.500 0-5-2.500-7.500-6S3.500 1 1 1z" />
          </Icon>
        </button>
      </div>
      <button aria-label="Catch playhead" className={`${tBlue} ml-2.5 w-[37px] rounded-[5px]`}>
        <Icon width={14} height={15} viewBox="0 0 14 15" strokeWidth={1.300}>
          <path d="M7 5v9.500M1 5.500L4 9l-3 3M13 5.500L10 9l3 3" />
          <path d="M5 1h4v2.500L7 5.500 5 3.500z" fill="currentColor" />
        </Icon>
      </button>
      <div className="ml-[11px] flex gap-px">
        <button aria-label="Pointer tool" className={`${tBtn} w-[46px] gap-2 rounded-l-[5px]`}>
          <svg width={10} height={15} viewBox="0 0 10 15" aria-hidden="true">
            <path d="M0.500 0.500v11.500l2.800-2.500 2 4.500 2-.8-2-4.400H9.500z" fill="#fff" />
          </svg>
          <Chevron className="text-[#a5a5a5]" />
        </button>
        <button aria-label="Marquee tool" className={`${tBtn} w-[47px] gap-[7px] rounded-r-[5px]`}>
          <Icon width={13} height={13} viewBox="0 0 13 13" strokeWidth={1.300}>
            <path d="M6.500 0.500v4M6.500 8.500v4M0.500 6.500h4M8.500 6.500h4M6.500 6.500h.01" />
          </Icon>
          <Chevron className="text-[#a5a5a5]" />
        </button>
      </div>
      <button aria-label="Track options" className={`${tBtn} ml-auto w-[43px] gap-2 rounded-[5px]`}>
        <DotsCircle />
        <Chevron className="text-[#a5a5a5]" />
      </button>
      <button aria-label="Waveform zoom" className={`${tBtn} ml-2.5 w-[34px] rounded-[5px]`}>
        <WaveBars width={15} height={17} />
      </button>
      <div className="ml-[11px] flex gap-px">
        <button aria-label="Auto zoom vertical" className={`${tBtn} w-[34px] rounded-l-[5px]`}>
          <Icon width={12} height={15} viewBox="0 0 12 15" strokeWidth={1.300}>
            <path d="M1 1h10M1 14h10M6 3.500v8M4 5.200L6 3.300l2 1.900M4 9.800l2 1.900 2-1.900" />
          </Icon>
        </button>
        <button aria-label="Auto zoom horizontal" className={`${tBtn} w-[34px] rounded-r-[5px]`}>
          <Icon width={16} height={12} viewBox="0 0 16 12" strokeWidth={1.300}>
            <path d="M1 1v10M15 1v10M4 6h8M5.800 4L3.800 6l2 2M10.200 4l2 2-2 2" />
          </Icon>
        </button>
      </div>
      <ZoomSlider label="Vertical zoom" value={36} className="ml-[9px] w-[83px] rounded-l-[5px] border-r border-[#262626] pl-2">
        <Icon width={9} height={14} viewBox="0 0 9 14" strokeWidth={1.300}>
          <path d="M4.500 1.500v11M1.500 4.200L4.500 1l3 3.200M1.500 9.800l3 3.200 3-3.200" />
        </Icon>
      </ZoomSlider>
      <ZoomSlider label="Horizontal zoom" value={38} className="w-[84px] rounded-r-[5px] pl-1.5">
        <Icon width={13} height={9} viewBox="0 0 13 9" strokeWidth={1.300}>
          <path d="M1.500 4.500h10M4 1.500l-3 3 3 3M9 1.500l3 3-3 3" />
        </Icon>
      </ZoomSlider>
    </div>
  );
}

const ticks = Array.from({ length: 35 }, (_, i) => 11.500 + i * 20.400);

function Ruler() {
  return (
    <div className="relative h-[41px] shrink-0 bg-[#353535] text-[14px] text-[#e6e6e6]">
      <div className="flex h-5 border-b border-[#1e1e1e] leading-[18px]">
        <div className="w-[35.500%] bg-[#535353]" />
        <div className="w-[45.400%] bg-[#535353] pl-1">4</div>
        <div className="flex-1 pl-1">5</div>
      </div>
      <svg className="absolute inset-0 h-full w-full" viewBox="0 0 720 41" preserveAspectRatio="none" aria-hidden="true">
        {ticks.map((x, i) => (
          <path key={x} d={`M${x} ${i % 4 ? 32 : 26}V41`} stroke={i % 4 ? "#747474" : "#8a8a8a"} />
        ))}
        <path d="M256.500 2V41M582.500 0V41" stroke="#8a8a8a" />
      </svg>
    </div>
  );
}

function TracksArea() {
  const hBtn = "flex h-[22px] w-9 items-center justify-center rounded-[5px] bg-[#5a5a5a] shadow-[0_1px_1px_#333]";
  return (
    <main className="flex min-w-0 flex-1 flex-col overflow-hidden rounded-br-[12px] border-2 border-l-[3px] border-t-[3px] border-[#6fb0fb] bg-[#2e2e2e] text-white">
      <TracksToolbar />
      <div className="flex min-h-0 flex-1">
        <div className="flex w-[358px] shrink-0 flex-col bg-[#575757]">
          <div className="flex h-[41px] shrink-0 items-center border-b border-[#404040] bg-[#464646] pl-2 pr-3">
            <button aria-label="Add track" className={hBtn}>
              <Icon width={12} height={12} viewBox="0 0 12 12"><path d="M6 0.700v10.600M0.700 6h10.600" /></Icon>
            </button>
            <button aria-label="Duplicate track" className={`${hBtn} ml-3`}>
              <Icon width={15} height={16} viewBox="0 0 15 16" strokeWidth={1.300}>
                <path d="M3.500 11.500H2.500c-1 0-1.700-.7-1.700-1.700V2.500C0.800 1.500 1.500 0.800 2.500 0.800h7c1 0 1.700.7 1.700 1.700v1" />
                <rect x={4} y={4} width={10.200} height={11} rx={1.700} />
                <path d="M9.100 7v5M6.600 9.500h5" />
              </Icon>
            </button>
            <button aria-label="Solo all" className="ml-3 flex h-[22px] w-9 items-center justify-center rounded-[5px] bg-[#b78d2c] text-[14px] font-medium">S</button>
            <button aria-label="Track header options" className={`${hBtn} ml-auto`}>
              <TrayIcon size={17} />
            </button>
          </div>
          <div className="flex h-[722px] flex-col">
            {tracks.map((t, i) => <TrackHeader key={t.name} index={i} track={t} />)}
          </div>
        </div>
        <div className="min-w-0 flex-1">
          <Ruler />
          <div className="flex h-[722px] flex-col">
            {tracks.map((t, i) => <Region key={t.name} index={i} track={t} />)}
          </div>
        </div>
      </div>
    </main>
  );
}

export default function App() {
  return (
    <div className="flex h-screen flex-col overflow-hidden bg-[#2b6e95] font-['Inter','Liberation_Sans',sans-serif]">
      <MenuBar />
      <div className="flex min-h-0 flex-1 flex-col overflow-hidden rounded-[14px]">
        <TitleBar />
        <div className="flex min-h-0 flex-1 bg-black">
          <Library />
          <div className="w-[3px] shrink-0" />
          <Inspector />
          <div className="w-0.5 shrink-0" />
          <TracksArea />
        </div>
      </div>
    </div>
  );
}
